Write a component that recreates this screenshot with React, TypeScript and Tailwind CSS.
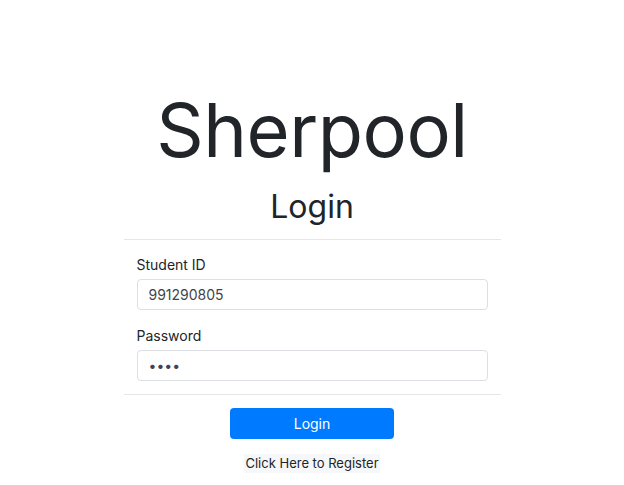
import React from 'react';

const App = () => {
  return (
    <div className="min-h-screen bg-white text-[#212529] font-['Inter',sans-serif]">
      <div className="w-[377px] mx-auto pt-[93px] flex flex-col items-center">
        <h1 className="text-[74px] leading-none font-normal tracking-[-0.5px]">Sherpool</h1>
        <h2 className="mt-[24px] text-[32px] leading-none font-normal">Login</h2>
        <hr className="mt-[16px] w-full border-t border-[#e5e6e8]" />
        <form className="w-full px-[13px] pt-[15px]" onSubmit={(e) => e.preventDefault()}>
          <label className="block text-[14px] leading-5">Student ID</label>
          <input
            type="text"
            defaultValue="991290805"
            className="mt-[4px] block w-full h-[31px] px-[11px] text-[14px] text-[#3f454b] border border-[#dcdfe3] rounded-[4px] outline-none"
          />
          <label className="block mt-[16px] text-[14px] leading-5">Password</label>
          <input
            type="password"
            defaultValue="1234"
            className="mt-[4px] block w-full h-[31px] px-[11px] text-[14px] text-[#3f454b] border border-[#dcdfe3] rounded-[4px] outline-none"
          />
        </form>
        <hr className="mt-[13px] w-full border-t border-[#e5e6e8]" />
        <button
          type="button"
          className="mt-[13px] w-[164px] h-[31px] rounded-[4px] bg-[#007bff] text-white text-[14px]"
        >
          Login
        </button>
        <a className="mt-[15px] px-[1px] h-[19px] leading-[19px] bg-[#f6f7f8] text-[13px] text-[#212529]">
          Click Here to Register
        </a>
      </div>
    </div>
  );
};

export default App;
